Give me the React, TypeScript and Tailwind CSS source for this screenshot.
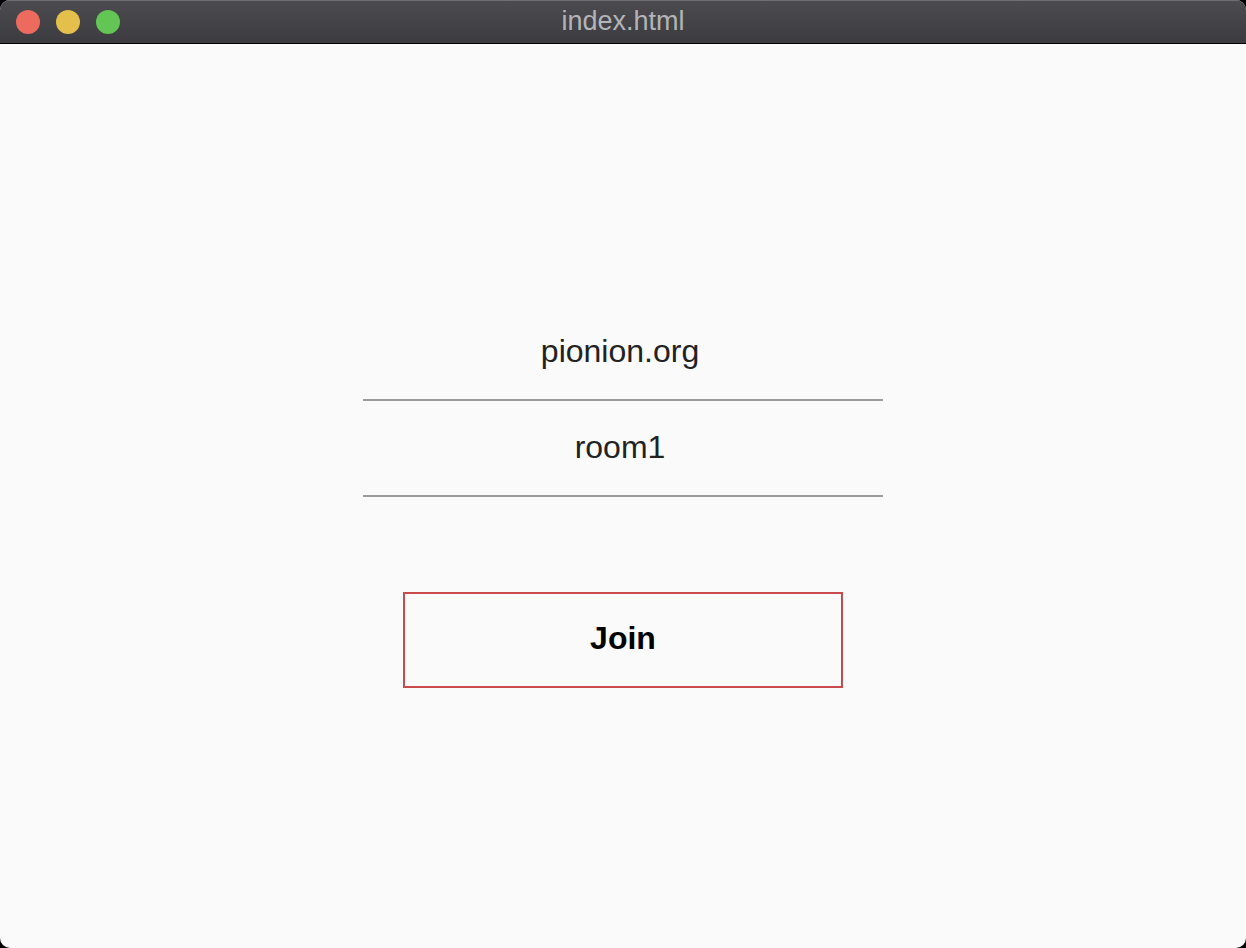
export default function App() {
  return (
    <div className="h-[948px] w-[1246px] bg-black font-['Liberation_Sans',Arial,sans-serif]">
      <div className="flex h-full flex-col overflow-hidden rounded-[10px] bg-[#fafafa]">
        {/* Title bar */}
        <div className="relative flex h-[44px] shrink-0 items-center justify-center border-b border-black bg-gradient-to-b from-[#4b4b50] to-[#3b3b40] shadow-[inset_0_1px_0_#6e6e73]">
          <div className="absolute left-[16px] top-[10px] flex gap-[16px]">
            <span className="h-[24px] w-[24px] rounded-full bg-[#ec6a5e]" />
            <span className="h-[24px] w-[24px] rounded-full bg-[#e4bf4b]" />
            <span className="h-[24px] w-[24px] rounded-full bg-[#62c554]" />
          </div>
          <span className="text-[27px] leading-none text-[#b4b4b8]">index.html</span>
        </div>

        {/* Content */}
        <div className="flex flex-1 flex-col items-center justify-center">
          <input
            defaultValue="pionion.org"
            className="h-[96px] w-[520px] border-b-2 border-[#9c9c9c] bg-transparent pr-[6px] text-center text-[32px] text-[#222] outline-none"
          />
          <input
            defaultValue="room1"
            className="h-[96px] w-[520px] border-b-2 border-[#9c9c9c] bg-transparent pr-[6px] text-center text-[32px] text-[#222] outline-none"
          />
          <button className="mt-[95px] h-[96px] w-[440px] border-2 border-[#c94a4a] bg-transparent pb-[3px] text-[32px] font-bold text-black">
            Join
          </button>
        </div>
      </div>
    </div>
  );
}
